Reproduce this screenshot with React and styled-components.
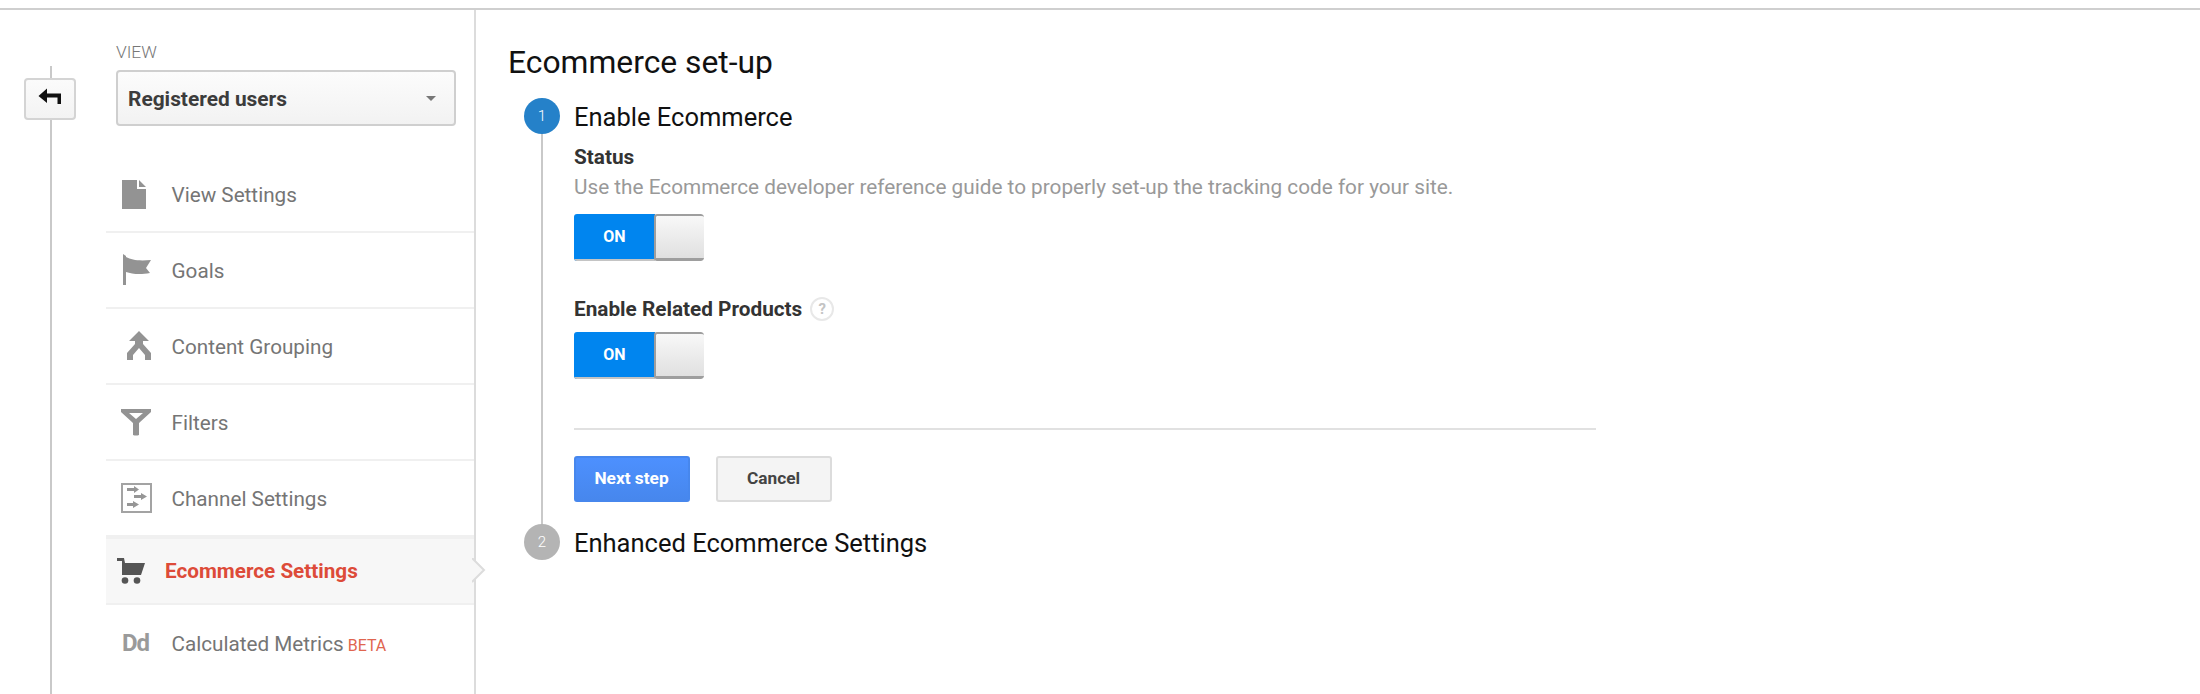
import React from "react";
import styled, { createGlobalStyle } from "styled-components";

const GlobalStyle = createGlobalStyle`
  html, body {
    margin: 0;
    padding: 0;
    height: 100%;
    background: #fff;
    font-family: Roboto, "Liberation Sans", sans-serif;
    overflow: hidden;
  }
  #root {
    height: 100%;
  }
`;

const Page = styled.div`
  height: 694px;
  display: flex;
  flex-direction: column;
  padding-top: 8px;
  box-sizing: border-box;
`;

const Body = styled.div`
  flex: 1;
  display: flex;
  min-height: 0;
  border-top: 2px solid #cfcfcf;
`;

const BackRail = styled.div`
  position: relative;
  width: 106px;
  flex-shrink: 0;
  padding: 68px 0 0 24px;
  box-sizing: border-box;

  &::before {
    content: "";
    position: absolute;
    left: 50px;
    top: 56px;
    bottom: 0;
    width: 2px;
    background: #c9c9c9;
  }
`;

const BackButton = styled.button`
  position: relative;
  display: flex;
  justify-content: center;
  padding: 8px 0 0;
  width: 52px;
  height: 42px;
  box-sizing: border-box;
  border: 2px solid #d4d4d4;
  border-radius: 4px;
  background: linear-gradient(#fbfbfb, #f3f3f3);
`;

const Sidebar = styled.aside`
  position: relative;
  width: 370px;
  flex-shrink: 0;
  box-sizing: border-box;
  border-right: 2px solid #dcdcdc;
`;

const ViewBlock = styled.div`
  padding: 32px 0 0 10px;
  height: 147px;
  box-sizing: border-box;
`;

const ViewLabel = styled.div`
  font-size: 17.4px;
  font-weight: 300;
  line-height: 20px;
  color: #777;
  height: 28px;
`;

const ViewSelect = styled.div`
  width: 340px;
  height: 56px;
  box-sizing: border-box;
  display: flex;
  align-items: center;
  justify-content: space-between;
  padding: 1px 18px 0 10px;
  border: 2px solid #cfcfcf;
  border-radius: 4px;
  background: linear-gradient(#fcfcfc, #f2f2f2);
  font-size: 20.9px;
  font-weight: 700;
  color: #3c3c3c;
`;

const Caret = styled.span`
  width: 0;
  height: 0;
  border-left: 5px solid transparent;
  border-right: 5px solid transparent;
  border-top: 5px solid #777;
`;

const NavList = styled.nav`
  display: flex;
  flex-direction: column;
`;

const NavRow = styled.div`
  display: flex;
  align-items: center;
  box-sizing: border-box;
  height: ${(p) => (p.$active ? "68px" : "76px")};
  font-size: 20.7px;
  color: ${(p) => (p.$active ? "#dd4b39" : "#757575")};
  font-weight: ${(p) => (p.$active ? 700 : 400)};
  background: ${(p) => (p.$active ? "#f7f7f7" : "#fff")};
  border-bottom: 2px solid #f0f0f0;
  border-top: ${(p) => (p.$active ? "2px solid #f0f0f0" : "none")};
  padding-left: ${(p) => (p.$active ? "11px" : "15px")};

  &:last-child {
    border-bottom: none;
  }
`;

const IconSlot = styled.span`
  display: flex;
  align-items: center;
  justify-content: flex-start;
  width: ${(p) => (p.$active ? "48px" : "50.5px")};
  flex-shrink: 0;
`;

const NavLabel = styled.span`
  padding-top: ${(p) => (p.$active ? "0" : "2px")};
`;

const IconSvg = styled.svg`
  margin-left: ${(p) => p.$offset || 0}px;
`;

const DdMark = styled.span`
  font-size: 24px;
  font-weight: 700;
  color: #9a9a9a;
  letter-spacing: -1px;
  padding-left: 1px;
`;

const Beta = styled.span`
  margin-left: 4px;
  font-size: 16px;
  color: #e0654f;
  align-self: center;
  padding-top: 5px;
`;

const ActivePointer = styled.svg`
  position: absolute;
  left: 366px;
  top: 548px;
`;

const Main = styled.main`
  flex: 1;
  padding: 34px 0 0 32px;
`;

const Title = styled.h1`
  margin: 0 0 18px;
  font-size: 31.8px;
  line-height: 36px;
  font-weight: 400;
  color: #111;
`;

const Steps = styled.div`
  padding-left: 16px;
`;

const Step = styled.section`
  position: relative;
  display: grid;
  grid-template-columns: 36px 1022px;
  column-gap: 14px;
  align-items: start;

  ${(p) =>
    p.$open &&
    `
    &::before {
      content: "";
      position: absolute;
      left: 17px;
      top: 0;
      bottom: -2px;
      width: 2px;
      background: #c9c9c9;
    }
  `}
`;

const StepBadge = styled.div`
  position: relative;
  width: 36px;
  height: 36px;
  border-radius: 50%;
  display: flex;
  align-items: center;
  justify-content: center;
  font-size: 15px;
  font-weight: 300;
  color: #fff;
  background: ${(p) => (p.$active ? "#2581c9" : "#b4b4b4")};
`;

const StepTitle = styled.h2`
  margin: 0;
  padding-top: 1px;
  font-size: 25.5px;
  line-height: 36px;
  font-weight: 400;
  color: #111;
`;

const StepBody = styled.div`
  grid-column: 2;
  padding-top: 9px;
  padding-bottom: 22px;
`;

const FieldLabel = styled.div`
  display: flex;
  align-items: center;
  gap: 8px;
  font-size: 20.75px;
  line-height: 26px;
  font-weight: 700;
  color: #333;
`;

const Help = styled.span`
  width: 20px;
  height: 20px;
  border: 2px solid #e8e8e8;
  border-radius: 50%;
  display: flex;
  align-items: center;
  justify-content: center;
  font-size: 15px;
  font-weight: 700;
  color: #c4c4c4;
`;

const FieldHint = styled.div`
  margin-top: 4px;
  font-size: 20.76px;
  line-height: 26px;
  color: #999;
`;

const Toggle = styled.div`
  display: flex;
  width: 130px;
  height: 47px;
  margin-top: ${(p) => p.$gap}px;
  border-radius: 3px;
  overflow: hidden;
`;

const ToggleOn = styled.div`
  width: 81px;
  display: flex;
  align-items: center;
  justify-content: center;
  font-size: 16px;
  font-weight: 700;
  color: #fff;
  background: #0085ef;
  border-bottom: 2px solid #c4c4c4;
  box-sizing: border-box;
`;

const ToggleKnob = styled.div`
  flex: 1;
  box-sizing: border-box;
  border-left: 2px solid #9e9e9e;
  border-top: 2px solid #9e9e9e;
  border-bottom: 3px solid #9e9e9e;
  border-radius: 3px;
  margin-left: -1px;
  background: linear-gradient(#f8f8f8, #e0e0e0);
`;

const FieldGap = styled.div`
  height: 35px;
`;

const Divider = styled.hr`
  margin: 49px 0 26px;
  border: none;
  height: 2px;
  background: #e1e1e1;
`;

const Actions = styled.div`
  display: flex;
  gap: 26px;
`;

const ActionButton = styled.button`
  width: 116px;
  height: 46px;
  box-sizing: border-box;
  border-radius: 3px;
  font-family: inherit;
  font-size: 17.3px;
  font-weight: 700;
  padding: 0 1px 2px 0;
  border: 2px solid ${(p) => (p.$primary ? "#4787ed" : "#dcdcdc")};
  color: ${(p) => (p.$primary ? "#fff" : "#444")};
  background: ${(p) =>
    p.$primary ? "linear-gradient(#4d90fe, #4787ed)" : "#f4f4f4"};
`;

const BackIcon = () => (
  <svg width="24" height="18" viewBox="0 0 24 18">
    <path d="M0.5 8 L9 0.5 V5.5 H23 V16 H19.5 V9.5 H9 V15 Z" fill="#111" />
  </svg>
);

const DocIcon = () => (
  <IconSvg $offset={1} width="24" height="29" viewBox="0 0 24 29">
    <path d="M0 0 H15 V9 H24 V29 H0 Z M17 0 L24 7 H17 Z" fill="#939393" />
  </IconSvg>
);

const FlagIcon = () => (
  <IconSvg $offset={1} width="30" height="32" viewBox="0 0 30 32">
    <path
      d="M1 0 L4 2 L4 3 C10 6 16 7 29 6 L24 14 L28 19 C18 21 10 20 4 18 V31 H1 Z"
      fill="#939393"
    />
  </IconSvg>
);

const MergeIcon = () => (
  <IconSvg $offset={5} width="26" height="30" viewBox="0 0 26 30">
    <path
      d="M13 0 L23 10 H17 V13 L25 22 V29 H19 V24 L13 17 L7 24 V29 H1 V22 L9 13 V10 H3 Z"
      fill="#939393"
    />
  </IconSvg>
);

const FilterIcon = () => (
  <IconSvg width="30" height="27" viewBox="0 0 30 27">
    <path
      d="M0 0 H30 V3 L18 14 V26 Q15 27 12 26 V14 L0 3 Z M8 4 L15 10 L22 4 Z"
      fill="#939393"
      fillRule="evenodd"
    />
  </IconSvg>
);

const ChannelIcon = () => (
  <IconSvg width="31" height="30" viewBox="0 0 31 30">
    <rect x="1" y="1" width="29" height="28" fill="none" stroke="#a3a3a3" strokeWidth="2" />
    <path
      d="M6 5 H13 V3 L18 6.5 L13 10 V8 H6 Z M13 12 H20 V10 L26 13.5 L20 17 V15 H13 Z M6 20 H12 V18 L18 21.5 L12 25 V23 H6 Z"
      fill="#969696"
    />
  </IconSvg>
);

const CartIcon = () => (
  <IconSvg width="28" height="26" viewBox="0 0 28 26">
    <path d="M0 0 H7 L8 5 H28 L24 17 H5 V3 H0 Z" fill="#555" />
    <circle cx="8" cy="22.5" r="3.3" fill="#555" />
    <circle cx="20" cy="22.5" r="3.3" fill="#555" />
  </IconSvg>
);

const navItems = [
  { label: "View Settings", icon: <DocIcon /> },
  { label: "Goals", icon: <FlagIcon /> },
  { label: "Content Grouping", icon: <MergeIcon /> },
  { label: "Filters", icon: <FilterIcon /> },
  { label: "Channel Settings", icon: <ChannelIcon /> },
  { label: "Ecommerce Settings", icon: <CartIcon />, active: true },
  { label: "Calculated Metrics", icon: <DdMark>Dd</DdMark>, beta: true },
];

const App = () => {
  return (
    <>
      <GlobalStyle />
      <Page>
        <Body>
          <BackRail>
            <BackButton aria-label="Back">
              <BackIcon />
            </BackButton>
          </BackRail>
          <Sidebar>
            <ViewBlock>
              <ViewLabel>VIEW</ViewLabel>
              <ViewSelect>
                Registered users
                <Caret />
              </ViewSelect>
            </ViewBlock>
            <NavList>
              {navItems.map((item) => (
                <NavRow key={item.label} $active={item.active}>
                  <IconSlot $active={item.active}>{item.icon}</IconSlot>
                  <NavLabel $active={item.active}>{item.label}</NavLabel>
                  {item.beta && <Beta>BETA</Beta>}
                </NavRow>
              ))}
            </NavList>
            <ActivePointer width="14" height="28" viewBox="0 0 14 28">
              <path d="M0 0 L12 12 L0 24 Z" fill="#f7f7f7" />
              <path d="M0 0 L12 12 L0 24" fill="none" stroke="#dcdcdc" strokeWidth="2" />
            </ActivePointer>
          </Sidebar>
          <Main>
            <Title>Ecommerce set-up</Title>
            <Steps>
              <Step $open>
                <StepBadge $active>1</StepBadge>
                <StepTitle>Enable Ecommerce</StepTitle>
                <StepBody>
                  <FieldLabel>Status</FieldLabel>
                  <FieldHint>
                    Use the Ecommerce developer reference guide to properly
                    set-up the tracking code for your site.
                  </FieldHint>
                  <Toggle $gap={14}>
                    <ToggleOn>ON</ToggleOn>
                    <ToggleKnob />
                  </Toggle>
                  <FieldGap />
                  <FieldLabel>
                    Enable Related Products
                    <Help>?</Help>
                  </FieldLabel>
                  <Toggle $gap={10}>
                    <ToggleOn>ON</ToggleOn>
                    <ToggleKnob />
                  </Toggle>
                  <Divider />
                  <Actions>
                    <ActionButton $primary>Next step</ActionButton>
                    <ActionButton>Cancel</ActionButton>
                  </Actions>
                </StepBody>
              </Step>
              <Step>
                <StepBadge>2</StepBadge>
                <StepTitle>Enhanced Ecommerce Settings</StepTitle>
              </Step>
            </Steps>
          </Main>
        </Body>
      </Page>
    </>
  );
};

export default App;
